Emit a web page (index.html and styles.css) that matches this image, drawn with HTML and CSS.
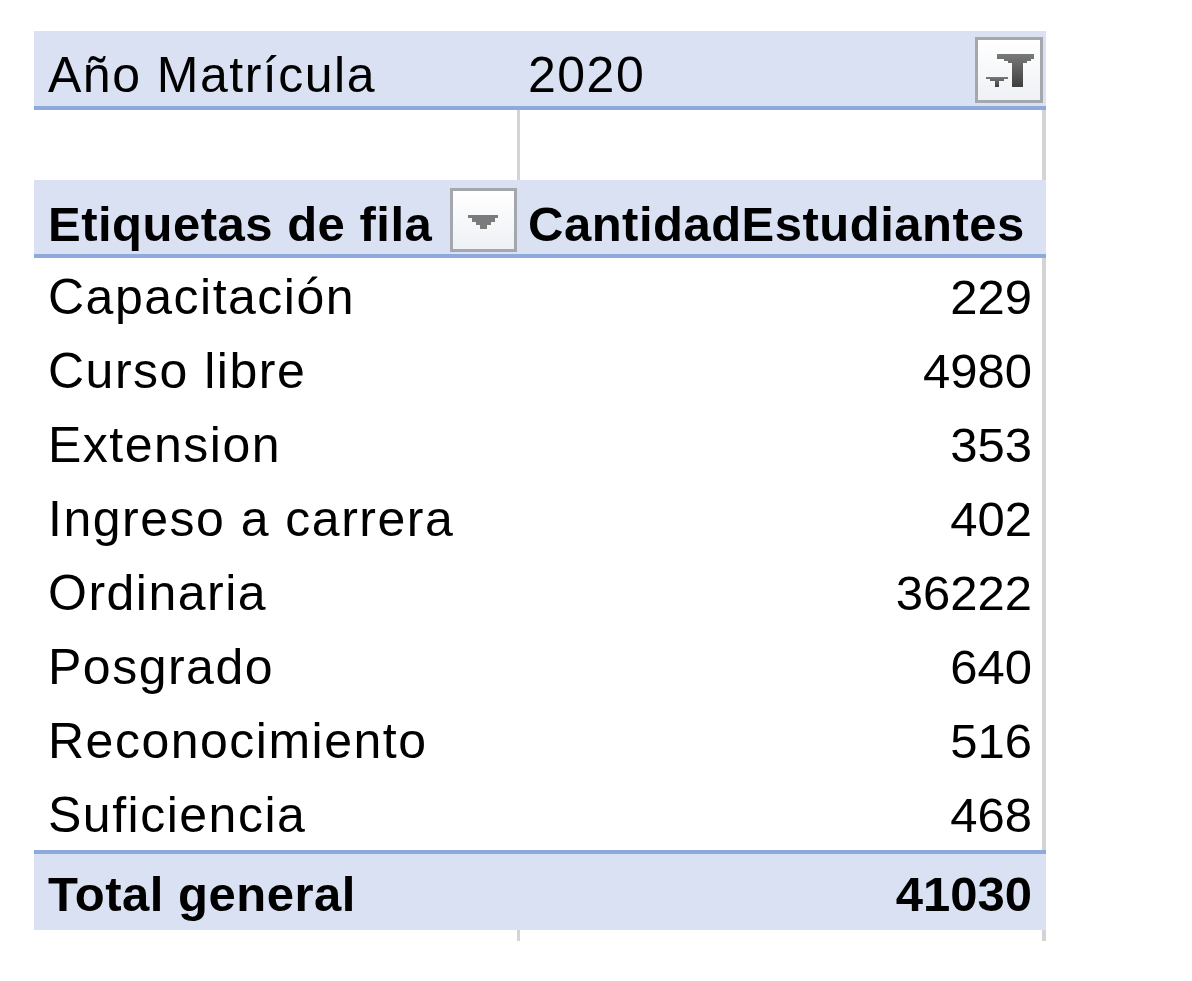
FILE: index.html
```html
<!DOCTYPE html>
<html lang="es">
<head>
<meta charset="utf-8">
<title>Tabla dinámica</title>
<link rel="stylesheet" href="styles.css">
</head>
<body>
<div class="sheet">
  <div class="row filter-row">
    <div class="cell label"><span class="txt">Año Matrícula</span></div>
    <div class="cell value">
      <span class="txt">2020</span>
      <span class="btn filter-btn">
        <svg width="62" height="60" viewBox="0 0 62 60">
          <defs>
            <linearGradient id="fg" x1="0" y1="0" x2="0" y2="1">
              <stop offset="0" stop-color="#7a7a7a"/>
              <stop offset="1" stop-color="#3e3e3e"/>
            </linearGradient>
          </defs>
          <polygon points="19,14 56,14 56,19 53,19 53,21 49,21 49,23 45,23 45,47 34,47 34,23 30,23 30,21 26,21 26,19 19,19" fill="url(#fg)"/>
          <polygon points="8,37 30,37 30,39 26,39 26,41 21,41 21,47 17,47 17,41 12,41 12,39 8,39" fill="url(#fg)"/>
        </svg>
      </span>
    </div>
  </div>

  <div class="row blank-row">
    <div class="cell"></div>
    <div class="cell"></div>
  </div>

  <div class="row header-row">
    <div class="cell label">
      <span class="txt">Etiquetas de fila</span>
      <span class="btn drop-btn">
        <svg width="61" height="58" viewBox="0 0 61 58">
          <polygon points="15,24 45,24 45,27 42,27 42,31 38,31 38,34 34,34 34,38 27,38 27,34 23,34 23,31 19,31 19,27 15,27" fill="#7b7b7b"/>
        </svg>
      </span>
    </div>
    <div class="cell value"><span class="txt">CantidadEstudiantes</span></div>
  </div>

  <div class="row data-row"><div class="cell label"><span class="txt">Capacitación</span></div><div class="cell num"><span class="txt">229</span></div></div>
  <div class="row data-row"><div class="cell label"><span class="txt">Curso libre</span></div><div class="cell num"><span class="txt">4980</span></div></div>
  <div class="row data-row"><div class="cell label"><span class="txt">Extension</span></div><div class="cell num"><span class="txt">353</span></div></div>
  <div class="row data-row"><div class="cell label"><span class="txt">Ingreso a carrera</span></div><div class="cell num"><span class="txt">402</span></div></div>
  <div class="row data-row"><div class="cell label"><span class="txt">Ordinaria</span></div><div class="cell num"><span class="txt">36222</span></div></div>
  <div class="row data-row"><div class="cell label"><span class="txt">Posgrado</span></div><div class="cell num"><span class="txt">640</span></div></div>
  <div class="row data-row"><div class="cell label"><span class="txt">Reconocimiento</span></div><div class="cell num"><span class="txt">516</span></div></div>
  <div class="row data-row"><div class="cell label"><span class="txt">Suficiencia</span></div><div class="cell num"><span class="txt">468</span></div></div>

  <div class="row total-row">
    <div class="cell label"><span class="txt">Total general</span></div>
    <div class="cell num"><span class="txt">41030</span></div>
  </div>

  <div class="row tail-row">
    <div class="cell"></div>
    <div class="cell"></div>
  </div>
</div>
</body>
</html>
```

FILE: styles.css
```css
html, body {
  margin: 0;
  padding: 0;
  background: #ffffff;
}

body {
  font-family: "Liberation Sans", Arial, sans-serif;
  color: #000000;
}

.sheet {
  margin-left: 34px;
  padding-top: 31px;
  width: 1012px;
}

.row {
  display: grid;
  grid-template-columns: 483px 1fr;
  box-sizing: border-box;
  width: 1012px;
}

.cell {
  display: flex;
  align-items: flex-start;
  box-sizing: border-box;
  min-width: 0;
}

.txt {
  display: block;
  font-size: 50px;
  line-height: 50px;
  letter-spacing: 1.5px;
  white-space: nowrap;
}

/* filter row */
.filter-row {
  height: 79px;
  background: #d9e1f2;
  border-bottom: 4px solid #8ea9db;
}

.filter-row .label {
  padding-left: 14px;
}

.filter-row .txt {
  padding-top: 19px;
}

.filter-row .value {
  padding-left: 11px;
  justify-content: space-between;
  padding-right: 3px;
}

.btn {
  display: block;
  box-sizing: border-box;
  border: 3px solid #a4a8ad;
  background: linear-gradient(#ffffff, #eef1f5);
}

.btn svg {
  display: block;
}

.filter-btn {
  width: 68px;
  height: 66px;
  margin-top: 6px;
}

/* blank row */
.blank-row {
  height: 70px;
}

.blank-row .cell:first-child,
.tail-row .cell:first-child {
  border-right: 3px solid #d4d4d4;
  width: 486px;
}

.blank-row .cell:last-child,
.tail-row .cell:last-child {
  border-right: 4px solid #d4d4d4;
  margin-left: 3px;
}

.blank-row,
.tail-row {
  grid-template-columns: 486px 1fr;
}

/* header row */
.header-row {
  height: 78px;
  background: #d9e1f2;
  border-bottom: 4px solid #8ea9db;
}

.header-row .txt {
  font-weight: bold;
  font-size: 49px;
  letter-spacing: 0.5px;
  padding-top: 19px;
}

.header-row .label {
  padding-left: 14px;
  justify-content: space-between;
}

.drop-btn {
  width: 67px;
  height: 64px;
  margin-top: 8px;
}

.header-row .value {
  padding-left: 11px;
}

/* data rows */
.data-row {
  height: 74px;
  border-right: 4px solid #d4d4d4;
}

.data-row .label,
.total-row .label {
  padding-left: 14px;
}

.data-row .txt {
  padding-top: 14px;
}

.num {
  justify-content: flex-end;
  padding-right: 10px;
}

.num .txt {
  font-size: 49px;
  letter-spacing: 0;
}

.data-row .num {
  padding-right: 10px;
}

/* total row */
.total-row {
  height: 80px;
  background: #d9e1f2;
  border-top: 4px solid #8ea9db;
  margin-top: 0;
}

.total-row .txt {
  font-weight: bold;
  font-size: 49px;
  letter-spacing: 0.5px;
  padding-top: 15px;
}

.total-row .num {
  padding-right: 14px;
}

.total-row .num .txt {
  letter-spacing: 0;
}

/* tail */
.tail-row {
  height: 11px;
}
```
